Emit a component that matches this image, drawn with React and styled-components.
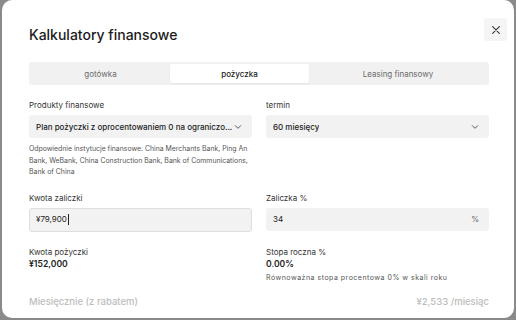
import React from "react";
import styled, { createGlobalStyle } from "styled-components";

const Global = createGlobalStyle`
  html, body { margin: 0; padding: 0; }
  body {
    background: #8a8a8a;
    font-family: Inter, "Noto Sans", sans-serif;
    overflow: hidden;
  }
`;

const Page = styled.div`
  width: 516px;
  height: 320px;
  padding-left: 2px;
  box-sizing: border-box;
  overflow: hidden;
`;

const Modal = styled.div`
  width: 512px;
  height: 318px;
  background: #fff;
  border-radius: 10px;
  box-sizing: border-box;
  padding: 18px 25px 0 27px;
  overflow: hidden;
`;

const Header = styled.div`
  display: flex;
  justify-content: space-between;
  align-items: flex-start;
  margin-right: -18px;
`;

const Title = styled.h1`
  margin: 7px 0 0;
  font-size: 14px;
  line-height: 20px;
  font-weight: 500;
  color: #1c1c1c;
`;

const Close = styled.button`
  width: 23px;
  height: 23px;
  border: none;
  border-radius: 3px;
  background: #f5f5f5;
  display: flex;
  align-items: center;
  justify-content: center;
  padding: 0;
`;

const Tabs = styled.div`
  margin-top: 17px;
  height: 23px;
  padding: 2px;
  box-sizing: border-box;
  background: #f1f1f1;
  border-radius: 3px;
  display: flex;
`;

const Tab = styled.div`
  width: ${(p) => p.$w}px;
  border-radius: 2px;
  display: flex;
  align-items: center;
  justify-content: center;
  font-size: 8px;
  color: ${(p) => (p.$active ? "#1c1c1c" : "#6a6a6a")};
  font-weight: ${(p) => (p.$active ? 500 : 400)};
  background: ${(p) => (p.$active ? "#fff" : "transparent")};
  box-shadow: ${(p) => (p.$active ? "0 1px 2px rgba(0,0,0,0.06)" : "none")};
`;

const Grid = styled.div`
  margin-top: 14px;
  display: grid;
  grid-template-columns: 223px 223px;
  column-gap: 14px;
  row-gap: 14px;
  align-items: start;
`;

const Field = styled.div`
  display: flex;
  flex-direction: column;
`;

const Label = styled.div`
  font-size: 8px;
  line-height: 12px;
  color: #333;
  margin-bottom: ${(p) => (p.$tight ? 0 : 4)}px;
`;

const Box = styled.div`
  height: ${(p) => (p.$bordered ? 24 : 23)}px;
  box-sizing: border-box;
  background: #f2f2f2;
  border: ${(p) => (p.$bordered ? "1px solid #dedede" : "none")};
  border-radius: 3px;
  display: flex;
  align-items: center;
  justify-content: space-between;
  padding: 0 10px 0 ${(p) => (p.$bordered ? 6 : 7)}px;
  font-size: 8px;
  color: #222;
`;

const BoxText = styled.span`
  white-space: nowrap;
  overflow: hidden;
  font-weight: ${(p) => (p.$medium ? 500 : 400)};
`;

const Caret = styled.span`
  display: inline-block;
  width: 1px;
  height: 11px;
  background: #222;
  margin-left: 1px;
  vertical-align: middle;
`;

const Unit = styled.span`
  color: #666;
  font-size: 8px;
`;

const Help = styled.div`
  margin-top: 5px;
  font-size: 6.9px;
  line-height: 11.5px;
  color: #555;
`;

const Value = styled.div`
  font-size: 8.6px;
  line-height: 12px;
  font-weight: 600;
  color: #1c1c1c;
`;

const Note = styled.div`
  font-size: 7px;
  letter-spacing: 0.5px;
  line-height: 12px;
  color: #555;
  margin-top: 2px;
`;

const Footer = styled.div`
  margin-top: 12px;
  display: flex;
  justify-content: space-between;
  align-items: center;
  font-size: 9.5px;
  color: #bdbdbd;
  font-weight: 500;
`;

const Chevron = () => (
  <svg width="8" height="8" viewBox="0 0 24 24" fill="none" stroke="#333" strokeWidth="2.4" strokeLinecap="round" strokeLinejoin="round">
    <path d="M4 8l8 8 8-8" />
  </svg>
);

export default function App() {
  return (
    <Page>
      <Global />
      <Modal>
        <Header>
          <Title>Kalkulatory finansowe</Title>
          <Close>
            <svg width="10" height="10" viewBox="0 0 24 24" fill="none" stroke="#333" strokeWidth="2.6" strokeLinecap="round">
              <path d="M4 4l16 16M20 4L4 20" />
            </svg>
          </Close>
        </Header>
        <Tabs>
          <Tab $w={139}>gotówka</Tab>
          <Tab $w={139} $active>pożyczka</Tab>
          <Tab $w={178}>Leasing finansowy</Tab>
        </Tabs>
        <Grid>
          <Field>
            <Label>Produkty finansowe</Label>
            <Box>
              <BoxText $medium>Plan pożyczki z oprocentowaniem 0 na ograniczo...</BoxText>
              <Chevron />
            </Box>
            <Help>
              Odpowiednie instytucje finansowe: China Merchants Bank, Ping An Bank, WeBank, China
              Construction Bank, Bank of Communications, Bank of China
            </Help>
          </Field>
          <Field>
            <Label>termin</Label>
            <Box>
              <BoxText $medium>60 miesięcy</BoxText>
              <Chevron />
            </Box>
          </Field>
          <Field>
            <Label>Kwota zaliczki</Label>
            <Box $bordered>
              <BoxText>
                ¥79,900
                <Caret />
              </BoxText>
            </Box>
          </Field>
          <Field>
            <Label>Zaliczka %</Label>
            <Box>
              <BoxText>34</BoxText>
              <Unit>%</Unit>
            </Box>
          </Field>
          <Field>
            <Label $tight>Kwota pożyczki</Label>
            <Value>¥152,000</Value>
          </Field>
          <Field>
            <Label $tight>Stopa roczna %</Label>
            <Value>0.00%</Value>
            <Note>Równoważna stopa procentowa 0% w skali roku</Note>
          </Field>
        </Grid>
        <Footer>
          <span>Miesięcznie (z rabatem)</span>
          <span>¥2,533 /miesiąc</span>
        </Footer>
      </Modal>
    </Page>
  );
}
